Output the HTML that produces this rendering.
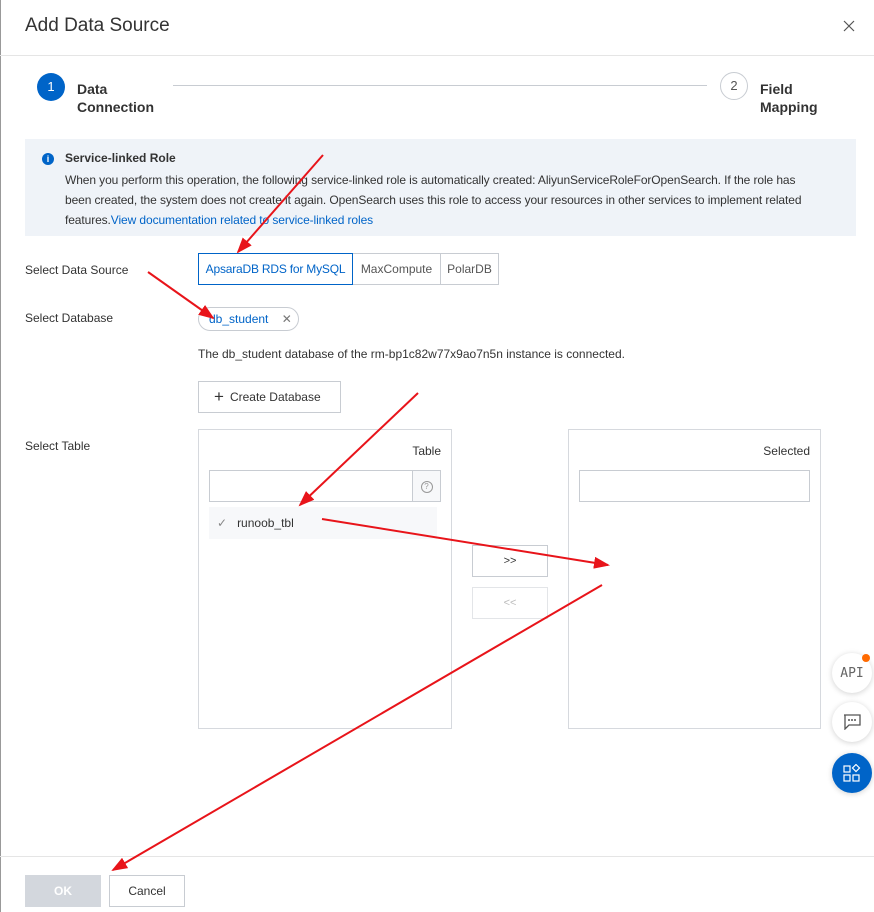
<!DOCTYPE html>
<html><head><meta charset="utf-8"><style>
*{box-sizing:border-box;margin:0;padding:0}
body{width:874px;height:912px;background:#fff;font-family:"Liberation Sans",sans-serif;color:#333;position:relative;overflow:hidden;font-size:12px}
.a{position:absolute}
.lbl{position:absolute;left:25px;font-size:12px;color:#333}
.box{position:absolute;border:1px solid #c8ccd2;background:#fff}
.fb{position:absolute;width:40px;height:40px;border-radius:50%;background:#fff;box-shadow:0 1px 6px rgba(0,0,0,.18);display:flex;align-items:center;justify-content:center}
</style></head><body>
<div class="a" style="left:0;top:0;width:1px;height:912px;background:#999"></div>
<div class="a" style="left:25px;top:15px;font-size:19px;color:#333">Add Data Source</div>
<svg class="a" style="left:843px;top:20px" width="12" height="12"><path d="M1 1L11 11M11 1L1 11" stroke="#555" stroke-width="1.2"/></svg>
<div class="a" style="left:0;top:55px;width:874px;height:1px;background:#e5e5e5"></div>

<div class="a" style="left:37px;top:73px;width:28px;height:28px;border-radius:50%;background:#0064c8;color:#fff;text-align:center;line-height:28px;font-size:13px">1</div>
<div class="a" style="left:77px;top:80px;font-size:14px;font-weight:bold;line-height:18px;color:#333">Data<br>Connection</div>
<div class="a" style="left:173px;top:85px;width:534px;height:1px;background:#c8ccd2"></div>
<div class="a" style="left:720px;top:72px;width:28px;height:28px;border-radius:50%;border:1px solid #c8ccd2;color:#555;text-align:center;line-height:26px;font-size:13px">2</div>
<div class="a" style="left:760px;top:80px;font-size:14px;font-weight:bold;line-height:18px;color:#333">Field<br>Mapping</div>

<div class="a" style="left:25px;top:139px;width:831px;height:97px;background:#eff3f8"></div>
<div class="a" style="left:42px;top:153px;width:12px;height:12px;border-radius:50%;background:#0064c8;color:#fff;font-size:9px;font-weight:bold;text-align:center;line-height:12px">i</div>
<div class="a" style="left:65px;top:151px;font-weight:bold;font-size:12px">Service-linked Role</div>
<div class="a" style="left:65px;top:170px;width:752px;font-size:12px;line-height:20px;color:#333;letter-spacing:-0.1px">When you perform this operation, the following service-linked role is automatically created: AliyunServiceRoleForOpenSearch. If the role has been created, the system does not create it again. OpenSearch uses this role to access your resources in other services to implement related features.<span style="color:#0064c8">View documentation related to service-linked roles</span></div>

<div class="lbl" style="top:263px">Select Data Source</div>
<div class="lbl" style="top:311px">Select Database</div>
<div class="lbl" style="top:439px">Select Table</div>

<div class="box" style="left:198px;top:253px;width:155px;height:32px;border-color:#0064c8;color:#0064c8;z-index:1;text-align:center;line-height:30px;letter-spacing:-0.2px">ApsaraDB RDS for MySQL</div>
<div class="box" style="left:352px;top:253px;width:89px;height:32px;text-align:center;line-height:30px;color:#555">MaxCompute</div>
<div class="box" style="left:440px;top:253px;width:59px;height:32px;text-align:center;line-height:30px;color:#555">PolarDB</div>

<div class="box" style="left:198px;top:307px;width:101px;height:24px;border-radius:12px;line-height:22px;padding-left:10px;color:#0064c8">db_student <span style="color:#777;margin-left:10px">✕</span></div>
<div class="a" style="left:198px;top:347px">The db_student database of the rm-bp1c82w77x9ao7n5n instance is connected.</div>
<div class="box" style="left:198px;top:381px;width:143px;height:32px;line-height:30px;padding-left:15px;color:#333"><span style="font-size:17px;vertical-align:-1px;margin-right:6px">+</span>Create Database</div>

<div class="box" style="left:198px;top:429px;width:254px;height:300px;border-color:#d6d9de"></div>
<div class="a" style="left:198px;top:444px;width:243px;text-align:right">Table</div>
<div class="box" style="left:209px;top:470px;width:232px;height:32px"></div>
<div class="box" style="left:412px;top:470px;width:29px;height:32px;background:#f7f8fa;text-align:center;line-height:30px;color:#999;font-size:11px"><span style="display:inline-block;width:12px;height:12px;border:1px solid #999;border-radius:50%;line-height:10px;font-size:8px">?</span></div>
<div class="a" style="left:209px;top:507px;width:228px;height:32px;background:#f7f8fa;line-height:32px;padding-left:8px;font-size:12px"><span style="color:#888;margin-right:10px">✓</span>runoob_tbl</div>

<div class="box" style="left:472px;top:545px;width:76px;height:32px;text-align:center;line-height:30px;font-size:11px">&gt;&gt;</div>
<div class="box" style="left:472px;top:587px;width:76px;height:32px;text-align:center;line-height:30px;font-size:11px;border-color:#e3e5e8;color:#bbb">&lt;&lt;</div>

<div class="box" style="left:568px;top:429px;width:253px;height:300px;border-color:#d6d9de"></div>
<div class="a" style="left:568px;top:444px;width:242px;text-align:right">Selected</div>
<div class="box" style="left:579px;top:470px;width:231px;height:32px"></div>

<div class="fb" style="left:832px;top:653px;font-size:13px;color:#666;font-family:'DejaVu Sans Mono',monospace">API</div>
<div class="a" style="left:862px;top:654px;width:8px;height:8px;border-radius:50%;background:#ff6a00"></div>
<div class="fb" style="left:832px;top:702px"><svg width="18" height="16"><path d="M1 1H17V11H6L2 15V1" fill="none" stroke="#555" stroke-width="1.3"/><circle cx="6" cy="6" r="1" fill="#555"/><circle cx="9" cy="6" r="1" fill="#555"/><circle cx="12" cy="6" r="1" fill="#555"/></svg></div>
<div class="fb" style="left:832px;top:753px;background:#0064c8"><svg width="18" height="18"><rect x="1" y="2" width="6" height="6" fill="none" stroke="#fff" stroke-width="1.2"/><rect x="1" y="11" width="6" height="6" fill="none" stroke="#fff" stroke-width="1.2"/><rect x="10" y="11" width="6" height="6" fill="none" stroke="#fff" stroke-width="1.2"/><path d="M13 0.5L16.5 4L13 7.5L9.5 4Z" fill="none" stroke="#fff" stroke-width="1.2"/></svg></div>

<div class="a" style="left:0;top:856px;width:874px;height:1px;background:#e5e5e5"></div>
<div class="a" style="left:25px;top:875px;width:76px;height:32px;background:#d3d7dd;color:#fff;font-weight:bold;text-align:center;line-height:32px">OK</div>
<div class="box" style="left:109px;top:875px;width:76px;height:32px;text-align:center;line-height:30px;color:#333">Cancel</div>

<svg class="a" style="left:0;top:0" width="874" height="912">
<defs><marker id="h" markerWidth="16" markerHeight="12" refX="14" refY="6" orient="auto" markerUnits="userSpaceOnUse"><path d="M0 0L16 6L0 12Z" fill="#e8141a"/></marker></defs>
<g stroke="#e8141a" stroke-width="2" fill="none" marker-end="url(#h)">
<line x1="323" y1="155" x2="238" y2="252"/>
<line x1="148" y1="272" x2="213" y2="318"/>
<line x1="418" y1="393" x2="300" y2="505"/>
<line x1="322" y1="519" x2="608" y2="565"/>
<line x1="602" y1="585" x2="113" y2="870"/>
</g></svg>
</body></html>
